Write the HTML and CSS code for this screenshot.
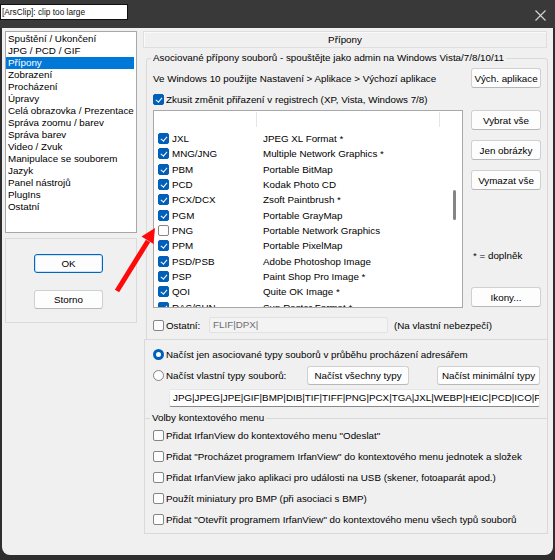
FILE: index.html
```html
<!DOCTYPE html>
<html lang="cs">
<head>
<meta charset="utf-8">
<title>IrfanView - Přípony</title>
<link rel="stylesheet" href="styles.css">
</head>
<body>
<div class="window">
  <div class="titlebar">
    <div class="clip">[ArsClip]: clip too large</div>
    <svg class="close" width="11" height="11" viewBox="0 0 11 11"><path d="M0.5 0.5 L10.5 10.5 M10.5 0.5 L0.5 10.5" stroke="#d6d6d6" stroke-width="1.1" fill="none"/></svg>
  </div>
  <div class="client">
    <div class="left">
      <div class="nav">
        <div class="nav-item">Spuštění / Ukončení</div>
        <div class="nav-item">JPG / PCD / GIF</div>
        <div class="nav-item sel">Přípony</div>
        <div class="nav-item">Zobrazení</div>
        <div class="nav-item">Procházení</div>
        <div class="nav-item">Úpravy</div>
        <div class="nav-item">Celá obrazovka / Prezentace</div>
        <div class="nav-item">Správa zoomu / barev</div>
        <div class="nav-item">Správa barev</div>
        <div class="nav-item">Video / Zvuk</div>
        <div class="nav-item">Manipulace se souborem</div>
        <div class="nav-item">Jazyk</div>
        <div class="nav-item">Panel nástrojů</div>
        <div class="nav-item">PlugIns</div>
        <div class="nav-item">Ostatní</div>
      </div>
      <div class="btnframe">
        <div class="btn btn-default">OK</div>
        <div class="btn">Storno</div>
      </div>
    </div>
    <div class="right">
      <div class="pagehead">Přípony</div>
      <div class="grp g1">
        <div class="legend">Asociované přípony souborů - spouštějte jako admin na Windows Vista/7/8/10/11</div>
        <div class="row r-win">
          <span>Ve Windows 10 použijte Nastavení &gt; Aplikace &gt; Výchozí aplikace</span>
          <div class="btn btn-side">Vých. aplikace</div>
        </div>
        <div class="row r-reg">
          <span class="cb on"></span><span class="cb-text">Zkusit změnit přiřazení v registrech (XP, Vista, Windows 7/8)</span>
        </div>
        <div class="r-list">
          <div class="lv">
            <div class="lv-main">
              <div class="lv-head"><div class="hc hc1"></div><div class="hc hc2"></div></div>
              <div class="lv-rows">
                <div class="lv-row"><span class="cb on"></span><span class="ext">JXL</span><span class="desc">JPEG XL Format *</span></div>
                <div class="lv-row"><span class="cb on"></span><span class="ext">MNG/JNG</span><span class="desc">Multiple Network Graphics *</span></div>
                <div class="lv-row"><span class="cb on"></span><span class="ext">PBM</span><span class="desc">Portable BitMap</span></div>
                <div class="lv-row"><span class="cb on"></span><span class="ext">PCD</span><span class="desc">Kodak Photo CD</span></div>
                <div class="lv-row"><span class="cb on"></span><span class="ext">PCX/DCX</span><span class="desc">Zsoft Paintbrush *</span></div>
                <div class="lv-row"><span class="cb on"></span><span class="ext">PGM</span><span class="desc">Portable GrayMap</span></div>
                <div class="lv-row"><span class="cb"></span><span class="ext">PNG</span><span class="desc">Portable Network Graphics</span></div>
                <div class="lv-row"><span class="cb on"></span><span class="ext">PPM</span><span class="desc">Portable PixelMap</span></div>
                <div class="lv-row"><span class="cb on"></span><span class="ext">PSD/PSB</span><span class="desc">Adobe Photoshop Image</span></div>
                <div class="lv-row"><span class="cb on"></span><span class="ext">PSP</span><span class="desc">Paint Shop Pro Image *</span></div>
                <div class="lv-row"><span class="cb on"></span><span class="ext">QOI</span><span class="desc">Quite OK Image *</span></div>
                <div class="lv-row"><span class="cb on"></span><span class="ext">RAS/SUN</span><span class="desc">Sun Raster Format *</span></div>
              </div>
            </div>
            <div class="lv-scroll"><div class="thumb"></div></div>
          </div>
          <div class="sidecol">
            <div class="btn btn-side">Vybrat vše</div>
            <div class="btn btn-side">Jen obrázky</div>
            <div class="btn btn-side">Vymazat vše</div>
            <div class="note">* = doplněk</div>
            <div class="btn btn-side">Ikony...</div>
          </div>
        </div>
        <div class="row r-other">
          <span class="cb"></span><span class="cb-text other-label">Ostatní:</span>
          <div class="field field-dis">FLIF|DPX|</div>
          <span class="risk">(Na vlastní nebezpečí)</span>
        </div>
      </div>
      <div class="grp g2">
        <div class="row r-rad1">
          <span class="rb on"></span><span class="cb-text">Načíst jen asociované typy souborů v průběhu procházení adresářem</span>
        </div>
        <div class="row r-rad2">
          <div class="rad-lab"><span class="rb"></span><span class="cb-text">Načíst vlastní typy souborů:</span></div>
          <div class="btn btn-all">Načíst všechny typy</div>
          <div class="btn btn-min">Načíst minimální typy</div>
        </div>
        <div class="field field-types">JPG|JPEG|JPE|GIF|BMP|DIB|TIF|TIFF|PNG|PCX|TGA|JXL|WEBP|HEIC|PCD|ICO|PPM|PGM|PBM|PSD</div>
      </div>
      <div class="grp g3">
        <div class="legend">Volby kontextového menu</div>
        <div class="row r-ctx"><span class="cb"></span><span class="cb-text">Přidat IrfanView do kontextového menu "Odeslat"</span></div>
        <div class="row r-ctx"><span class="cb"></span><span class="cb-text">Přidat "Procházet programem IrfanView" do kontextového menu jednotek a složek</span></div>
        <div class="row r-ctx"><span class="cb"></span><span class="cb-text">Přidat IrfanView jako aplikaci pro události na USB (skener, fotoaparát apod.)</span></div>
        <div class="row r-ctx"><span class="cb"></span><span class="cb-text">Použít miniatury pro BMP (při asociaci s BMP)</span></div>
        <div class="row r-ctx"><span class="cb"></span><span class="cb-text">Přidat "Otevřít programem IrfanView" do kontextového menu všech typů souborů</span></div>
      </div>
    </div>
  </div>
  <svg class="arrow" width="555" height="560" viewBox="0 0 555 560">
    <line x1="117" y1="291" x2="148" y2="241" stroke="#ff0a0a" stroke-width="5"/>
    <polygon points="155,228 153.5,244 141.5,236.5" fill="#ff0a0a"/>
  </svg>
</div>
</body>
</html>
```

FILE: styles.css
```css
html, body {
  margin: 0;
  padding: 0;
}
body {
  width: 555px;
  height: 560px;
  overflow: hidden;
  background: #262626;
  font-family: "Liberation Sans", Arial, sans-serif;
  font-size: 9.8px;
  color: #000;
}
.window {
  position: relative;
  width: 555px;
  height: 560px;
  background: #2e2e2e;
}
.titlebar {
  height: 28px;
  background: #393939;
  display: flex;
  justify-content: space-between;
  align-items: flex-start;
}
.clip {
  margin-top: 4px;
  width: 125px;
  height: 14px;
  border: 1px solid #111;
  background: #fff;
  font-size: 8.3px;
  line-height: 14px;
  padding-left: 1px;
  box-sizing: content-box;
  color: #111;
  white-space: nowrap;
}
.close {
  margin-top: 10px;
  margin-right: 9px;
}
.client {
  margin-left: 2px;
  width: 551px;
  height: 527px;
  box-sizing: border-box;
  background: #f0f0f0;
  border-radius: 0 0 8px 8px;
  display: flex;
  gap: 6px;
  padding: 3px 4px 0 3px;
}
.left {
  width: 132px;
  display: flex;
  flex-direction: column;
}
.nav {
  height: 202px;
  box-sizing: border-box;
  border: 1px solid #a8a8a8;
  background: #fff;
  padding-top: 1px;
}
.nav-item {
  height: 12px;
  line-height: 12px;
  padding-left: 2px;
  margin-right: 2px;
  white-space: nowrap;
  overflow: hidden;
}
.nav-item.sel {
  background: #0078d7;
  color: #fff;
}
.btnframe {
  margin-top: 5px;
  height: 85px;
  box-sizing: border-box;
  border: 1px solid #dadada;
  padding: 15px 0 0 28px;
  display: flex;
  flex-direction: column;
  gap: 17px;
}
.btn {
  height: 19px;
  box-sizing: border-box;
  border: 1px solid #d0d0d0;
  border-bottom-color: #b8b8b8;
  border-radius: 3px;
  background: #fdfdfd;
  display: flex;
  align-items: center;
  justify-content: center;
  white-space: nowrap;
}
.btnframe .btn {
  width: 69px;
}
.btn-default {
  border: 1px solid #0067c0;
  box-shadow: inset 0 0 0 1px #cfe3f6;
}
.right {
  width: 406px;
  display: flex;
  flex-direction: column;
}
.pagehead {
  height: 17px;
  box-sizing: border-box;
  border: 1px solid #dedede;
  box-shadow: inset 1px 1px 0 #fafafa;
  text-align: center;
  line-height: 15px;
  margin-right: 2px;
}
.grp {
  border: 1px solid #d9d9d9;
  box-sizing: border-box;
}
.legend {
  height: 12px;
  line-height: 12px;
  margin-top: -7px;
  align-self: flex-start;
  background: #f0f0f0;
  padding: 0 2px;
  white-space: nowrap;
}
.g1 {
  margin: 10px 1px 0 3px;
  height: 282px;
  display: flex;
  flex-direction: column;
  padding: 0 6px 0 6px;
  border-radius: 3px 3px 0 0;
}
.g1 .legend {
  margin-left: -2px;
}
.row {
  display: flex;
  align-items: center;
  white-space: nowrap;
}
.r-win {
  margin-top: 4px;
  height: 20px;
  justify-content: space-between;
}
.btn-side {
  width: 70px;
  height: 20px;
}
.r-reg {
  height: 22px;
}
.cb {
  width: 11px;
  height: 11px;
  box-sizing: border-box;
  border: 1px solid #858585;
  border-radius: 2px;
  background: #fdfdfd;
  flex: none;
  position: relative;
}
.cb.on {
  background: #005fb8;
  border-color: #005fb8;
}
.cb.on::after {
  content: "";
  position: absolute;
  left: 2.5px;
  top: 1px;
  width: 2.5px;
  height: 5px;
  border: solid #fff;
  border-width: 0 1.2px 1.2px 0;
  transform: rotate(40deg);
}
.cb-text {
  margin-left: 2px;
}
.r-list {
  display: flex;
  gap: 8px;
  height: 198px;
}
.lv {
  width: 310px;
  height: 198px;
  box-sizing: border-box;
  border: 1px solid #a8a8a8;
  background: #fff;
  display: flex;
  overflow: hidden;
}
.lv-main {
  flex: 1;
  overflow: hidden;
}
.lv-head {
  height: 20px;
  display: flex;
}
.hc {
  height: 15px;
  margin-top: 1px;
  border-right: 1px solid #e5e5e5;
}
.hc1 { width: 102px; }
.hc2 { width: 182px; }
.lv-row {
  height: 15.33px;
  display: flex;
  align-items: center;
  white-space: nowrap;
}
.lv-row .cb {
  margin-left: 4px;
}
.ext {
  margin-left: 3px;
  width: 91px;
}
.lv-scroll {
  width: 15px;
  flex: none;
}
.thumb {
  margin: 79px 0 0 6px;
  width: 3px;
  height: 30px;
  border-radius: 2px;
  background: #858585;
}
.sidecol {
  display: flex;
  flex-direction: column;
}
.sidecol .btn + .btn {
  margin-top: 10px;
}
.note {
  margin: 60px 0 0 2px;
  height: 12px;
  line-height: 12px;
}
.note + .btn {
  margin-top: 25px;
}
.r-other {
  margin-top: 9px;
  height: 16px;
}
.other-label {
  width: 43px;
}
.field {
  box-sizing: border-box;
  white-space: nowrap;
  overflow: hidden;
}
.field-dis {
  width: 179px;
  height: 16px;
  line-height: 14px;
  border: 1px solid #e2e2e2;
  background: #f3f3f3;
  color: #6e6e6e;
  padding-left: 3px;
  border-radius: 2px;
}
.risk {
  margin-left: 6px;
}
.g2 {
  margin: -1px 1px 0 1px;
  height: 79px;
  border-bottom: none;
  padding: 0 0 0 8px;
  display: flex;
  flex-direction: column;
}
.rb {
  width: 11px;
  height: 11px;
  box-sizing: border-box;
  border: 1px solid #858585;
  border-radius: 50%;
  background: #fdfdfd;
  flex: none;
}
.rb.on {
  border: 3.5px solid #005fb8;
  background: #fff;
}
.r-rad1 {
  margin-top: 4px;
  height: 20px;
}
.r-rad2 {
  margin-top: 1px;
  height: 20px;
}
.rad-lab {
  width: 154px;
  display: flex;
  align-items: center;
}
.btn-all {
  width: 102px;
  height: 19px;
}
.btn-min {
  width: 103px;
  height: 19px;
  margin-left: 28px;
}
.field-types {
  margin: 4px 0 0 16px;
  width: 371px;
  height: 18px;
  line-height: 16px;
  background: #fff;
  border: 1px solid #e6e6e6;
  border-bottom-color: #8a8a8a;
  padding-left: 3px;
  border-radius: 2px;
}
.g3 {
  margin: 0 1px 0 1px;
  height: 116px;
  padding: 0 0 0 8px;
  display: flex;
  flex-direction: column;
}
.g3 .legend {
  margin-left: -3px;
}
.g3 .legend + .r-ctx {
  margin-top: 1px;
}
.r-ctx {
  height: 21px;
}
.arrow {
  position: absolute;
  left: 0;
  top: 0;
  pointer-events: none;
}
```
